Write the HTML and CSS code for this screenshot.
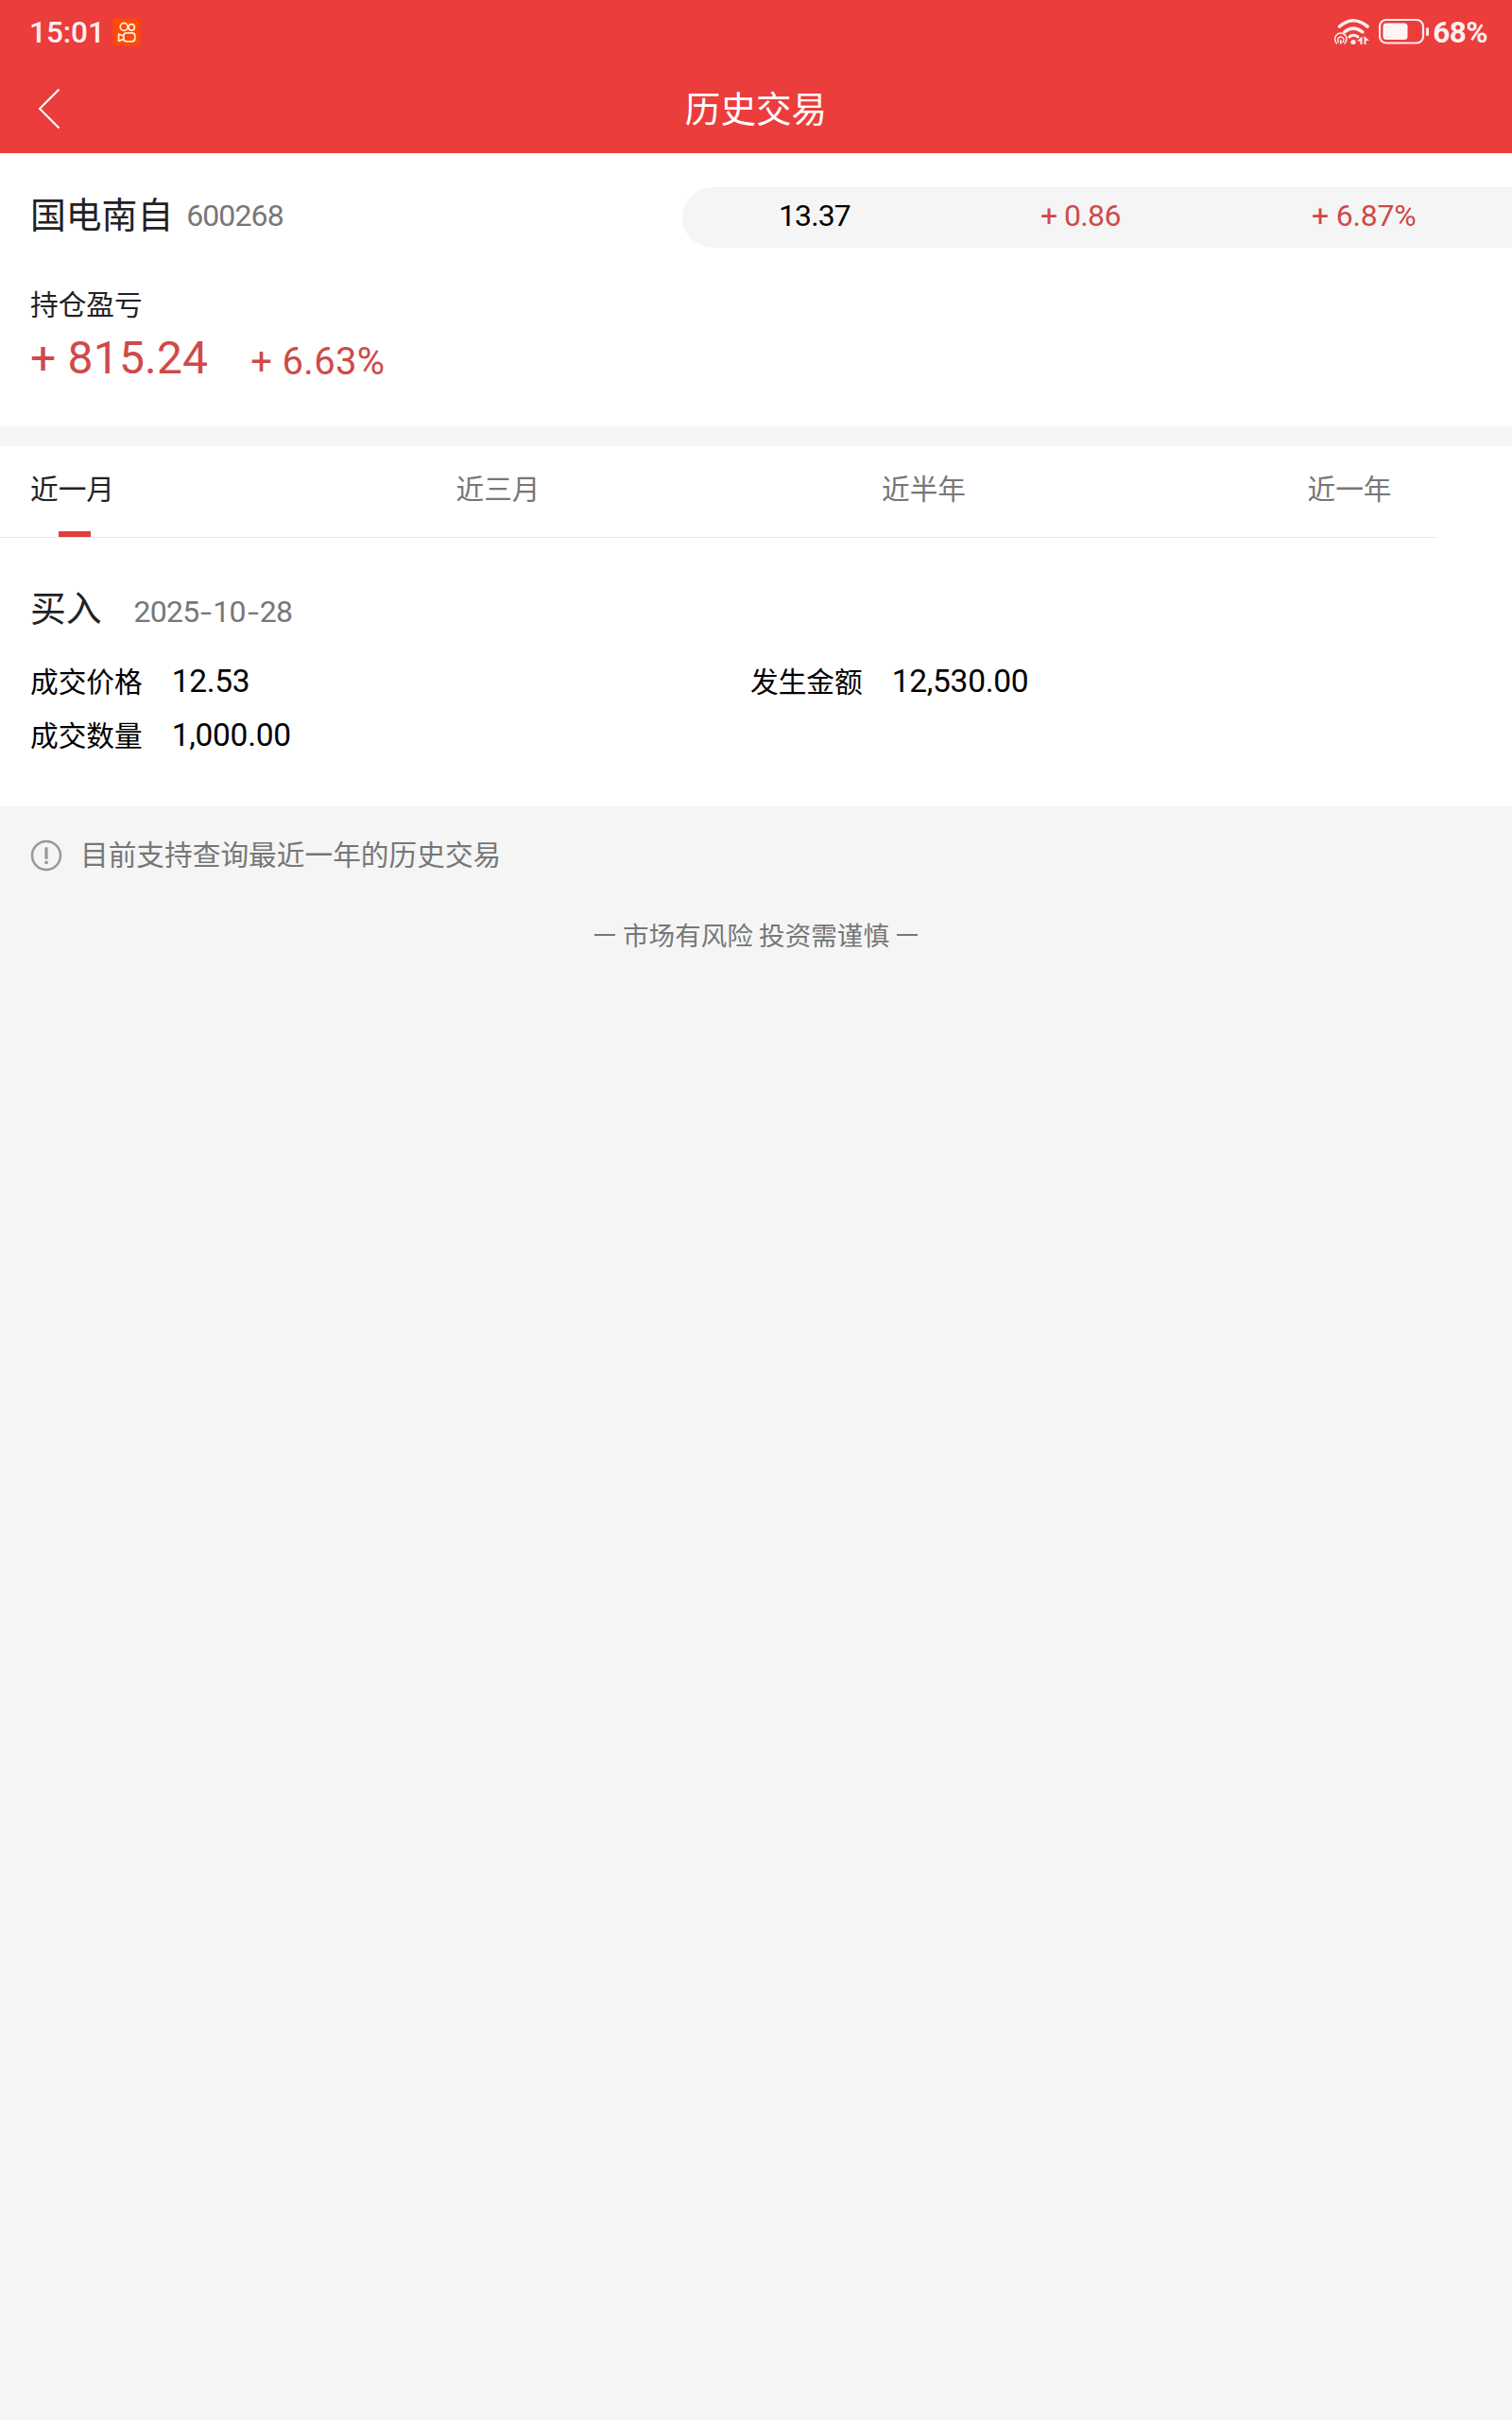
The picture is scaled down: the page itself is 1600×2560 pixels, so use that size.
FILE: index.html
```html
<!DOCTYPE html>
<html lang="zh-CN">
<head>
<meta charset="utf-8">
<title>历史交易</title>
<link rel="stylesheet" href="styles.css">
</head>
<body>
<header class="header">
  <div class="status">
    <span class="clock num">15:01</span>
    <svg class="app-icon" width="30" height="30" viewBox="0 0 30 30" fill="none">
      <rect x=".5" y=".5" width="29" height="29" fill="#ff4906"/>
      <g stroke="#fff3dc" stroke-width="1.7">
        <circle cx="12.2" cy="9.4" r="4"/>
        <circle cx="20.2" cy="9.9" r="3.2"/>
        <rect x="11.8" y="15.8" width="12" height="9" rx="3"/>
        <path d="M11.8 19 6.6 17v7.4l5.2-2" stroke-linejoin="round"/>
      </g>
    </svg>
    <div class="status-right">
      <svg width="40" height="30" viewBox="0 0 40 30" fill="none" stroke="#fff0f0" stroke-linecap="round">
        <path d="M6.500 9Q21 -3.500 36 9" stroke-width="3.600"/>
        <path d="M11.500 15Q21 7 31 15" stroke-width="3.400"/>
        <path d="M17 20Q21 16.500 26 20" stroke-width="3"/>
        <circle cx="21" cy="25.500" r="2.600" fill="#fff0f0" stroke="none"/>
        <path d="M3.800 27A6.200 6.200 0 1 1 11.800 27" stroke-width="1.500"/>
        <path d="M5.600 25.500A3.200 3.200 0 1 1 10 25.500" stroke-width="1.300"/>
        <path d="M7.800 23.500V27" stroke-width="1.600"/>
        <path d="M25 24.500 30.500 19.500V28H28.500V24.500ZM38 24 32.500 19V28H34.500V24Z" fill="#fff0f0" stroke="none"/>
      </svg>
      <svg class="battery" width="54" height="30" viewBox="0 0 54 30" fill="none">
        <rect x="1" y="2" width="46" height="24.500" rx="7" stroke="#ffe9e9" stroke-width="2.200"/>
        <rect x="4.500" y="5.500" width="26" height="17.500" rx="3.500" fill="#fff3f3"/>
        <rect x="50" y="10" width="3" height="9" rx="1.500" fill="#ffe9e9"/>
      </svg>
      <span class="percent num">68%</span>
    </div>
  </div>
  <div class="nav">
    <svg class="back" width="24" height="44" viewBox="0 0 24 44" fill="none" stroke="#fff" stroke-width="2">
      <path d="M22.500 1.500 2 22 22.500 42.500"/>
    </svg>
    <h1 class="title">历史交易</h1>
  </div>
</header>
<main>
  <section class="holding">
    <div class="stock">
      <h2 class="name">国电南自</h2>
      <span class="code num">600268</span>
      <div class="quote num">
        <span>13.37</span>
        <span class="up">+ 0.86</span>
        <span class="up wide">+ 6.87%</span>
      </div>
    </div>
    <div class="label">持仓盈亏</div>
    <div class="profit num up">
      <span class="amount">+ 815.24</span>
      <span class="rate">+ 6.63%</span>
    </div>
  </section>
  <nav class="tabs">
    <span class="tab active">近一月</span>
    <span class="tab">近三月</span>
    <span class="tab">近半年</span>
    <span class="tab">近一年</span>
  </nav>
  <section class="record">
    <div class="record-head">
      <h2 class="side">买入</h2>
      <span class="date num">2025<i>-</i>10<i>-</i>28</span>
    </div>
    <dl class="details">
      <div class="item"><dt>成交价格</dt><dd class="num">12.53</dd></div>
      <div class="item"><dt>发生金额</dt><dd class="num">12,530.00</dd></div>
      <div class="item"><dt>成交数量</dt><dd class="num">1,000.00</dd></div>
    </dl>
  </section>
  <p class="notice">
    <svg width="34" height="34" viewBox="0 0 34 34" fill="none" stroke="#999">
      <circle cx="17" cy="17" r="15" stroke-width="2.500"/>
      <path d="M17 9.500V19.500" stroke-width="3.200" stroke-linecap="round"/>
      <circle cx="17" cy="24.300" r="1.900" fill="#999" stroke="none"/>
    </svg>
    <span>目前支持查询最近一年的历史交易</span>
  </p>
  <p class="risk"><span class="dash"></span>市场有风险 投资需谨慎<span class="dash"></span></p>
</main>
</body>
</html>
```
FILE: styles.css
```css
* { box-sizing: border-box; }

body {
  margin: 0;
  min-height: 2560px;
  background: #f5f5f5;
  color: #222;
  font-family: "Noto Sans CJK SC", sans-serif;
  font-size: 29.7px;
}

h1, h2, p, dl, dd { margin: 0; font-weight: 400; }

.num {
  font-family: Roboto, "Noto Sans CJK SC", sans-serif;
  white-space: pre;
}

.up { color: #cf4a48; }

.header {
  height: 162px;
  background: #eb3d3c;
  color: #fff;
}

.status {
  display: flex;
  align-items: center;
  height: 68px;
  padding: 0 26px 0 31px;
  font-size: 31.5px;
  font-weight: 500;
  color: #fff0f0;
}

.clock { width: 88px; }

.status-right {
  display: flex;
  align-items: center;
  margin-left: auto;
}

.battery { margin-left: 8px; }

.percent { margin-left: 3px; font-weight: 700; letter-spacing: -0.6px; }

.nav {
  display: grid;
  grid-template-columns: 64px 1fr 64px;
  align-items: center;
  height: 94px;
}

.back { margin-left: 40px; }

.title {
  margin-top: -4px;
  font-size: 37.6px;
  line-height: 90px;
  text-align: center;
}

.holding {
  height: 289px;
  padding: 36px 0 0 32px;
  background: #fff;
}

.stock {
  display: flex;
  align-items: center;
  height: 64px;
}

.name {
  font-size: 37.8px;
  line-height: 60px;
  margin-top: -11px;
}

.code {
  margin-left: 14px;
  margin-top: -5px;
  color: #777;
  font-size: 32px;
  letter-spacing: -0.9px;
}

.quote {
  display: grid;
  grid-template-columns: 277px 287px auto;
  align-items: center;
  width: 878px;
  height: 64px;
  margin-left: auto;
  padding: 0 0 5px 102px;
  border-radius: 32px 0 0 32px;
  background: #f5f5f5;
  color: #000;
  font-size: 32px;
  letter-spacing: -0.9px;
}

.quote .up { letter-spacing: -0.6px; }

.quote .wide { letter-spacing: -0.2px; }

.label { margin-top: 39px; line-height: 40px; }

.profit {
  display: flex;
  align-items: baseline;
  gap: 45px;
  line-height: 60px;
  margin-top: 8px;
}

.amount { font-size: 48px; letter-spacing: 0.2px; }

.rate { position: relative; top: 1px; font-size: 40px; letter-spacing: 0.3px; }

.tabs {
  display: grid;
  grid-template-columns: repeat(3, 450.5px) auto;
  width: 1520px;
  height: 97px;
  margin-top: 21px;
  padding-left: 32px;
  border-bottom: 1px solid #e8e8e8;
  background: #fff;
  box-shadow: 80px 0 #fff;
}

.tab { color: #777; line-height: 88px; }

.active { position: relative; color: #222; }

.active::after {
  content: "";
  position: absolute;
  left: 30px;
  bottom: 0;
  width: 34px;
  height: 6px;
  background: #df3f3e;
}

.record {
  height: 284px;
  padding: 44px 32px 0;
  background: #fff;
}

.record-head {
  display: flex;
  align-items: center;
  height: 60px;
}

.side { font-size: 37.8px; line-height: 56px; margin-top: -4px; }

.date {
  margin-left: 34px;
  margin-top: 7px;
  color: #777;
  font-size: 32px;
  letter-spacing: -0.8px;
}

.date i {
  display: inline-block;
  width: 15px;
  font-style: normal;
  text-align: center;
  transform: scaleX(1.35);
}

.details {
  display: grid;
  grid-template-columns: 762px 1fr;
  margin-top: 19px;
}

.item {
  display: flex;
  align-items: center;
  height: 57px;
  color: #000;
}

.item dt { line-height: 40px; margin-top: -2px; }

.item dd { margin-left: 31px; font-size: 33.5px; letter-spacing: -0.3px; }

.notice {
  display: flex;
  align-items: center;
  gap: 19px;
  height: 104px;
  padding-left: 32px;
  color: #777;
}

.notice span { line-height: 40px; margin-top: -5px; }

.risk {
  display: flex;
  align-items: center;
  justify-content: center;
  gap: 8px;
  height: 62px;
  color: #777;
  font-size: 27.6px;
}

.dash { width: 22px; height: 2px; margin-top: 2px; background: #777; }
```
